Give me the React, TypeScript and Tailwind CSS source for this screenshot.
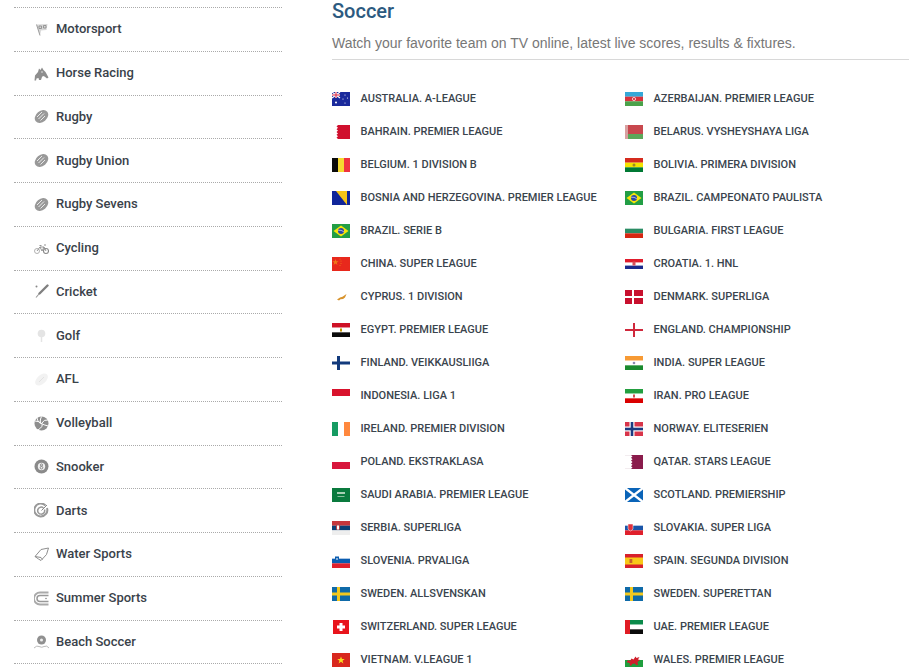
import type { ReactNode } from 'react'

const stripesH = (colors: string[]) => {
  const h = 14 / colors.length
  return colors.map((c, i) => <rect key={i} x="0" y={i * h} width="18" height={h + 0.05} fill={c} />)
}

const stripesV = (colors: string[]) => {
  const w = 18 / colors.length
  return colors.map((c, i) => <rect key={i} x={i * w} y="0" width={w + 0.05} height="14" fill={c} />)
}

const nordic = (bg: string, cross: string) => (
  <>
    <rect width="18" height="14" fill={bg} />
    <rect x="5" width="3" height="14" fill={cross} />
    <rect y="5.500" width="18" height="3" fill={cross} />
  </>
)

const flags: Record<string, ReactNode> = {
  australia: (
    <>
      <rect width="18" height="14" fill="#1a2a9c" />
      <path d="M0 0l8 6M8 0L0 6" stroke="#fff" strokeWidth="1.200" />
      <path d="M4 0v6M0 3h8" stroke="#fff" strokeWidth="2" />
      <path d="M4 0v6M0 3h8" stroke="#d8203c" strokeWidth="1" />
      <circle cx="4" cy="10.500" r="1" fill="#fff" />
      <circle cx="13" cy="3" r=".6" fill="#fff" />
      <circle cx="13" cy="11" r=".6" fill="#fff" />
      <circle cx="15.500" cy="6" r=".6" fill="#fff" />
      <circle cx="11" cy="7" r=".6" fill="#fff" />
    </>
  ),
  bahrain: (
    <path d="M6 0h12v14H6l-1.500-1.400 1.500-1.400-1.500-1.400 1.500-1.400-1.500-1.400 1.500-1.400-1.500-1.400 1.500-1.400-1.500-1.400z" fill="#d0102e" />
  ),
  belgium: stripesV(['#0b0b0b', '#f5d930', '#ef3340']),
  bosnia: (
    <>
      <rect width="18" height="14" fill="#10259a" />
      <path d="M4 0h11v14z" fill="#f5c518" />
    </>
  ),
  brazil: (
    <>
      <rect width="18" height="14" fill="#229e45" />
      <path d="M9 1.500L16.500 7 9 12.500 1.500 7z" fill="#f8e509" />
      <circle cx="9" cy="7" r="3" fill="#2b49a3" />
      <path d="M6.200 6.300q3-.6 5.600 1.400" stroke="#fff" strokeWidth=".6" fill="none" />
    </>
  ),
  china: (
    <>
      <rect width="18" height="14" fill="#e8281c" />
      <path d="M3.500 2l.8 2.300h2.300l-1.900 1.400.8 2.300-2-1.400-2 1.400.8-2.300L.4 4.300h2.300z" fill="#f07a18" />
      <circle cx="8" cy="2" r=".5" fill="#f07a18" />
      <circle cx="9" cy="4" r=".5" fill="#f07a18" />
      <circle cx="9" cy="6.500" r=".5" fill="#f07a18" />
      <circle cx="8" cy="8.500" r=".5" fill="#f07a18" />
    </>
  ),
  cyprus: <path d="M5 9.500l3-2 2.500-.7 2.500-1.800 1.500-1-1.500 3.500-2 1.500-2.500.3-1.500 1.200z" fill="#d8932c" />,
  egypt: (
    <>
      {stripesH(['#ce1126', '#fff', '#0a0a0a'])}
      <rect x="8" y="5.500" width="2" height="3" fill="#c09300" />
    </>
  ),
  finland: nordic('#fff', '#123a7c'),
  indonesia: <rect width="18" height="7" fill="#d8122c" />,
  ireland: stripesV(['#169b62', '#fff', '#ff883e']),
  poland: <rect y="7" width="18" height="7" fill="#d8163c" />,
  saudi: (
    <>
      <rect width="18" height="14" fill="#0a7a3e" />
      <rect x="5" y="4" width="8" height="2" fill="#a8d0b4" />
      <rect x="5.500" y="8" width="7" height=".8" fill="#a8d0b4" />
    </>
  ),
  serbia: (
    <>
      {stripesH(['#c6363c', '#0c4076', '#eeeeee'])}
      <rect x="4" y="2.500" width="4" height="6.500" rx="1.500" fill="#b5434a" />
      <rect x="5" y="4.500" width="2" height="4" fill="#fff" />
    </>
  ),
  slovenia: (
    <>
      {stripesH(['#fff', '#0a5cb0', '#e0202c'])}
      <path d="M3 2.500h4v3.500l-2 2-2-2z" fill="#0a5cb0" />
      <path d="M3.800 5.500L5 3.800l1.200 1.700z" fill="#fff" />
    </>
  ),
  sweden: nordic('#0f6aa8', '#f2c81e'),
  switzerland: (
    <>
      <rect x="1" width="16" height="14" fill="#e8141c" />
      <rect x="7.500" y="3" width="3" height="8" fill="#fff" />
      <rect x="5" y="5.500" width="8" height="3" fill="#fff" />
    </>
  ),
  vietnam: (
    <>
      <rect width="18" height="14" fill="#d8281e" />
      <path d="M9 3.500l1 2.600h2.700l-2.200 1.600.9 2.700L9 8.700l-2.400 1.700.9-2.700-2.200-1.600H8z" fill="#f8dc20" />
    </>
  ),
  azerbaijan: (
    <>
      {stripesH(['#35a8d8', '#d8323c', '#4aa24a'])}
      <circle cx="9" cy="7" r="1.600" fill="none" stroke="#fff" strokeWidth=".7" />
    </>
  ),
  belarus: (
    <>
      <rect width="18" height="9" fill="#c8484e" />
      <rect y="9" width="18" height="5" fill="#5ca85a" />
      <rect width="3" height="14" fill="#d8a0a0" />
    </>
  ),
  bolivia: (
    <>
      {stripesH(['#d52b1e', '#f4e400', '#007934'])}
      <circle cx="9" cy="7" r="1.500" fill="#a08a20" />
    </>
  ),
  bulgaria: (
    <>
      <rect y="4.670" width="18" height="4.670" fill="#2a8c64" />
      <rect y="9.330" width="18" height="4.670" fill="#d62612" />
    </>
  ),
  croatia: (
    <>
      <rect y="2" width="18" height="3.400" fill="#e01c2c" />
      <rect y="8.600" width="18" height="3.400" fill="#1a2a8c" />
      <rect x="7.500" y="4.500" width="3" height="4" fill="#d8505a" />
    </>
  ),
  denmark: (
    <>
      <rect width="18" height="14" fill="#c8102e" />
      <rect x="7" width="2" height="14" fill="#fff" />
      <rect y="6" width="18" height="2" fill="#fff" />
    </>
  ),
  england: (
    <>
      <rect x="8" width="2" height="14" fill="#d0283c" />
      <rect y="6" width="18" height="2" fill="#d0283c" />
    </>
  ),
  india: (
    <>
      {stripesH(['#f79a34', '#fff', '#1a8a2e'])}
      <circle cx="9" cy="7" r="1.300" fill="#8a8ab0" />
    </>
  ),
  iran: (
    <>
      {stripesH(['#239f40', '#fff', '#da0000'])}
      <rect x="8" y="5.500" width="2" height="3" fill="#d05050" />
    </>
  ),
  norway: (
    <>
      <rect width="18" height="14" fill="#d8344a" />
      <rect x="4.500" width="5" height="14" fill="#fff" />
      <rect y="4.500" width="18" height="5" fill="#fff" />
      <rect x="5.700" width="2.600" height="14" fill="#1c3a80" />
      <rect y="5.700" width="18" height="2.600" fill="#1c3a80" />
    </>
  ),
  qatar: (
    <>
      <rect x="0" y="0" width="7" height=".5" fill="#e4d8de" />
      <rect x="0" y="13.500" width="7" height=".5" fill="#e4d8de" />
      <path d="M6 0h12v14H6l1.500-1.400L6 11.200l1.500-1.400L6 8.400 7.500 7 6 5.600l1.500-1.400L6 2.800l1.500-1.400z" fill="#8a1c4c" />
    </>
  ),
  scotland: (
    <>
      <rect width="18" height="14" fill="#0a64b8" />
      <path d="M0 0l18 14M18 0L0 14" stroke="#fff" strokeWidth="2.400" />
    </>
  ),
  slovakia: (
    <>
      {stripesH(['#fff', '#1a55a8', '#e0202c'])}
      <path d="M3 3h5v4.500q0 1.500-2.500 2.500Q3 9 3 7.500z" fill="#e0303c" stroke="#fff" strokeWidth=".5" />
    </>
  ),
  spain: (
    <>
      <rect width="18" height="14" fill="#d8202c" />
      <rect y="3.500" width="18" height="7" fill="#f8c818" />
      <rect x="4.500" y="5" width="2.800" height="4" fill="#c8602c" />
    </>
  ),
  uae: (
    <>
      {stripesH(['#0a8a4a', '#fff', '#0a0a0a'])}
      <rect width="5" height="14" fill="#e01c24" />
    </>
  ),
  wales: (
    <>
      <rect y="7" width="18" height="7" fill="#1f9e3e" />
      <path d="M1.500 9l2-2 1.500 1 1.500-2.500 2 1 2-3 1 1.500 3-1-1.500 2.500 2 .5-2.500 2 .5 3h-2l-1-1.500-3 .5-.5 1.500H4.500l.5-2z" fill="#d0202c" />
    </>
  ),
}

function Flag({ id }: { id: string }) {
  return (
    <svg width="18" height="14" viewBox="0 0 18 14" className="shrink-0">
      {flags[id]}
    </svg>
  )
}

const rugby = (
  <>
    <ellipse cx="7.500" cy="7.500" rx="7.500" ry="5.500" transform="rotate(-40 7.500 7.500)" fill="#999" />
    <path d="M3 8l5-5M4.500 10l5.500-5.500M6.500 11.500l4.500-4.500" stroke="#fff" strokeWidth=".8" />
  </>
)

const sportIcons: Record<string, ReactNode> = {
  motorsport: (
    <>
      <path d="M2.500 2.500L13.500 2l-1 6-5.500.5L6 13.500z" fill="#d8d8d8" />
      <path d="M2.500 2.500L6 13.500M5 4h2.500v2.500H5zM9.500 3.500H12V6H9.500z" stroke="#888" strokeWidth=".8" fill="none" />
    </>
  ),
  horse: (
    <>
      <path d="M.5 14.500l.5-5 3-3.500 1-3.500 1.500 1.500L8 1.500l1.500 2.500 2 2 3 5.500-1.500 1-2.500-2-1.500-.5-1 1-1 3H5l-.5-2-2 .5-.5 2z" fill="#8e8e8e" />
      <circle cx="8" cy="6" r=".7" fill="#fff" />
    </>
  ),
  rugby,
  cycling: (
    <>
      <circle cx="3" cy="10" r="2.500" fill="none" stroke="#aaa" strokeWidth=".9" />
      <circle cx="12" cy="10" r="2.500" fill="none" stroke="#888" strokeWidth="1.100" />
      <path d="M3 10l3-4h4l2 4M6 6l2 4 2-4M5.500 4.500h2M10 4h2" stroke="#888" strokeWidth=".9" fill="none" />
    </>
  ),
  cricket: (
    <>
      <path d="M13.500 1.500L5.500 9.500" stroke="#808080" strokeWidth="2.400" strokeLinecap="round" />
      <path d="M5 10l-3 3.500" stroke="#999" strokeWidth="1.100" />
      <circle cx="2.500" cy="2.500" r="1" fill="#888" />
    </>
  ),
  golf: (
    <>
      <circle cx="7.500" cy="5.500" r="3.800" fill="#e4e4e4" />
      <path d="M7.500 9v5" stroke="#e4e4e4" strokeWidth="1.500" />
    </>
  ),
  afl: (
    <>
      <ellipse cx="7.500" cy="7.500" rx="7.500" ry="4.500" transform="rotate(-42 7.500 7.500)" fill="#f2f2f2" />
      <path d="M5 10l5-5" stroke="#e2e2e2" strokeWidth="1" />
    </>
  ),
  volleyball: (
    <>
      <circle cx="7.500" cy="7.500" r="7" fill="#8e8e8e" />
      <path d="M7.500.5Q5 6 7.500 7.500T14 10M1 5q4 0 6.500 2.500T4 14M14 4Q10 3 7.500 7.500M3 2q1 5 4.500 5.500" stroke="#fff" strokeWidth="1" fill="none" />
    </>
  ),
  snooker: (
    <>
      <circle cx="7.500" cy="7.500" r="7" fill="#8a8a8a" />
      <circle cx="7.500" cy="7.500" r="3.700" fill="#eee" />
      <circle cx="7.500" cy="6" r="1.100" fill="none" stroke="#777" strokeWidth=".8" />
      <circle cx="7.500" cy="8.700" r="1.300" fill="none" stroke="#777" strokeWidth=".8" />
    </>
  ),
  darts: (
    <>
      <path d="M11.500 2.500A6.500 6.500 0 1 0 13 5" fill="none" stroke="#999" strokeWidth="2" />
      <path d="M9.500 5A3.500 3.500 0 1 0 10.500 6.500" fill="none" stroke="#999" strokeWidth="1.500" />
      <path d="M7.500 7.500L13 2" stroke="#888" strokeWidth="1" />
    </>
  ),
  water: (
    <path d="M14.500 1L7 2.500 1 9.500l3.500 2.500 2.500 1.500 5.500-6zM1 9.500l6 1 1.500 2" fill="none" stroke="#8e8e8e" strokeWidth="1" />
  ),
  summer: (
    <>
      <path d="M14.500 1.500H6A5.500 5.500 0 0 0 6 13.500h8.500" fill="none" stroke="#aaa" strokeWidth="1.800" />
      <path d="M14.500 4.500H6a3 3 0 0 0 0 6h8.500" fill="none" stroke="#999" strokeWidth="1.500" />
      <circle cx="12" cy="7.500" r=".8" fill="#888" />
    </>
  ),
  beach: (
    <>
      <circle cx="7.500" cy="6" r="4.500" fill="#909090" />
      <circle cx="7.500" cy="6" r="1.500" fill="#eee" />
      <path d="M0 14q3-3 5-1.500 3 1.500 5 0 3-1.500 5 1.500" fill="none" stroke="#bbb" strokeWidth="1" />
    </>
  ),
}

const sports = [
  ['Motorsport', 'motorsport'],
  ['Horse Racing', 'horse'],
  ['Rugby', 'rugby'],
  ['Rugby Union', 'rugby'],
  ['Rugby Sevens', 'rugby'],
  ['Cycling', 'cycling'],
  ['Cricket', 'cricket'],
  ['Golf', 'golf'],
  ['AFL', 'afl'],
  ['Volleyball', 'volleyball'],
  ['Snooker', 'snooker'],
  ['Darts', 'darts'],
  ['Water Sports', 'water'],
  ['Summer Sports', 'summer'],
  ['Beach Soccer', 'beach'],
]

const leagues = [
  ['australia', 'Australia. A-League'],
  ['azerbaijan', 'Azerbaijan. Premier League'],
  ['bahrain', 'Bahrain. Premier League'],
  ['belarus', 'Belarus. Vysheyshaya Liga'],
  ['belgium', 'Belgium. 1 Division B'],
  ['bolivia', 'Bolivia. Primera Division'],
  ['bosnia', 'Bosnia and Herzegovina. Premier League'],
  ['brazil', 'Brazil. Campeonato Paulista'],
  ['brazil', 'Brazil. Serie B'],
  ['bulgaria', 'Bulgaria. First League'],
  ['china', 'China. Super League'],
  ['croatia', 'Croatia. 1. HNL'],
  ['cyprus', 'Cyprus. 1 Division'],
  ['denmark', 'Denmark. Superliga'],
  ['egypt', 'Egypt. Premier League'],
  ['england', 'England. Championship'],
  ['finland', 'Finland. Veikkausliiga'],
  ['india', 'India. Super League'],
  ['indonesia', 'Indonesia. Liga 1'],
  ['iran', 'Iran. Pro League'],
  ['ireland', 'Ireland. Premier Division'],
  ['norway', 'Norway. Eliteserien'],
  ['poland', 'Poland. Ekstraklasa'],
  ['qatar', 'Qatar. Stars League'],
  ['saudi', 'Saudi Arabia. Premier League'],
  ['scotland', 'Scotland. Premiership'],
  ['serbia', 'Serbia. Superliga'],
  ['slovakia', 'Slovakia. Super Liga'],
  ['slovenia', 'Slovenia. Prvaliga'],
  ['spain', 'Spain. Segunda Division'],
  ['sweden', 'Sweden. Allsvenskan'],
  ['sweden', 'Sweden. Superettan'],
  ['switzerland', 'Switzerland. Super League'],
  ['uae', 'UAE. Premier League'],
  ['vietnam', 'Vietnam. V.League 1'],
  ['wales', 'Wales. Premier League'],
]

export default function App() {
  return (
    <div className="flex h-[672px] w-[909px] overflow-hidden bg-white font-['Roboto',sans-serif]">
      <aside className="w-[306px] shrink-0 pt-[7px] pl-[14px] pr-[24px]">
        <ul className="border-t border-dotted border-[#aaa]">
          {sports.map(([name, icon]) => (
            <li key={name} className="flex h-[43.75px] items-center gap-[7px] border-b border-dotted border-[#aaa] pl-[20px]">
              <svg width="15" height="15" viewBox="0 0 15 15" className="shrink-0">
                {sportIcons[icon]}
              </svg>
              <span className="text-[13px] leading-5 font-medium text-[#3a424a]">{name}</span>
            </li>
          ))}
        </ul>
      </aside>

      <main className="flex-1 pl-[26px]">
        <h1 className="text-[20px] leading-[23px] font-medium text-[#2c5a80]">Soccer</h1>
        <p className="mt-[12px] border-b border-[#d8d8d8] pb-[7px] font-['Liberation_Sans',sans-serif] text-[14px] leading-[17px] text-[#777]">
          Watch your favorite team on TV online, latest live scores, results &amp; fixtures.
        </p>
        <div className="mt-[22px] grid grid-cols-[293px_1fr]">
          {leagues.map(([flag, label]) => (
            <div key={label} className="flex h-[33px] items-center gap-[10.5px]">
              <Flag id={flag} />
              <span className="text-[11px] leading-4 font-medium whitespace-nowrap text-[#3a444d] uppercase">{label}</span>
            </div>
          ))}
        </div>
      </main>
    </div>
  )
}
